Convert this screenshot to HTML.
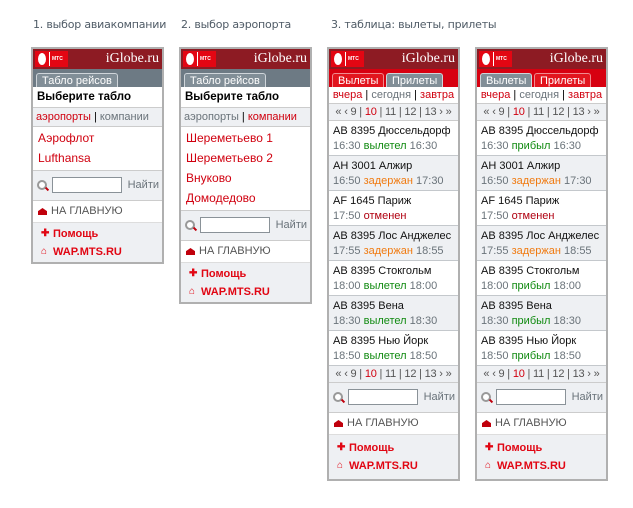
<!DOCTYPE html>
<html><head><meta charset="utf-8"><style>
body{margin:0;width:633px;height:508px;background:#fff;font-family:"Liberation Sans",sans-serif;position:relative;overflow:hidden}
.cap{position:absolute;top:18px;font-size:11px;color:#4f5b66;font-family:"DejaVu Sans",sans-serif;letter-spacing:-0.2px}
.p{position:absolute;top:47px;width:129px;border:2px solid #b0b0b0;background:#fff;font-size:11px;color:#222}
.hd{height:20px;background:#8d1b23;position:relative}
.logo{position:absolute;left:2px;top:2px;width:33px;height:16px;background:#e30613}
.logo i{position:absolute;left:3px;top:2px;width:8px;height:12px;background:#fff;border-radius:50%}
.logo b{position:absolute;left:14px;top:1px;width:17px;height:14px;font-size:5px;color:#fff;line-height:14px;border-left:1px solid #fff;padding-left:2px}
.hd .t{position:absolute;right:3px;top:2px;color:#fff;font-family:"Liberation Serif",serif;font-size:14px}
.tb{height:18px;background:#6d7a84;position:relative}
.tb.r{background:#d70010}
.tab{position:absolute;top:4px;height:14px;line-height:14px;font-size:11px;padding:0 5px;border-radius:3px 3px 0 0;color:#fff;background:#818e97;border:1px solid #cfd5da;border-bottom:0;box-sizing:border-box}
.tab.on{background:#e2151e;border-color:#f08a8f;color:#fff}
.sel{height:20px;line-height:20px;font-weight:bold;padding-left:4px;border-bottom:1px solid #ccc;font-size:11.5px;color:#000}
.lk{height:18px;line-height:18px;padding-left:3px;background:#eef0f3;border-bottom:1px solid #ccc;color:#6a737a}
.red{color:#d0000f}
.it{padding-left:5px;font-size:12px;color:#d0000f;line-height:20px}
.srch{height:29px;background:#eef0f3;border-top:1px solid #ccc;border-bottom:1px solid #ccc;position:relative;color:#6a737a}
.srch .m{position:absolute;left:4px;top:9px;width:6px;height:6px;border:2px solid #999;border-radius:50%;background:#fff}
.srch .m:after{content:"";position:absolute;left:6px;top:6px;width:4px;height:2px;background:#c0000c;transform:rotate(45deg)}
.srch input{position:absolute;left:19px;top:6px;width:70px;height:16px;border:1px solid #8a9298;padding:0;margin:0;box-sizing:border-box}
.srch span{position:absolute;right:3px;top:8px;font-size:11px}
.home{height:21px;line-height:21px;padding-left:18px;position:relative;color:#555;border-bottom:1px solid #ddd}
.home:before{content:"";position:absolute;left:5px;top:7px;width:9px;height:7px;background:#c0000c;clip-path:polygon(50% 0,100% 45%,100% 100%,0 100%,0 45%)}
.ft{background:#eef0f3;padding:2px 0 1px 8px;font-weight:bold;color:#e10613;line-height:18px}
.ft.b{padding:4px 0 4px 8px}
.ft div{padding-left:12px;position:relative}
.ft div:before{position:absolute;left:0;top:0;content:"✚";font-size:10px}
.ft div.w:before{content:"⌂";font-size:10px}
.dy{height:16px;line-height:16px;text-align:center;color:#6a737a;border-bottom:1px solid #ccc}
.pg{height:16px;line-height:16px;text-align:center;color:#555;background:#eef0f3;border-bottom:1px solid #ccc;letter-spacing:-0.2px}
.row{height:35px;border-bottom:1px solid #c4c8cc;padding-left:4px;line-height:15px;padding-top:3px;box-sizing:border-box;color:#111}
.row.g{background:#eef0f3}
.row .s{color:#6a737a}
.gr{color:#108a10}.or{color:#f07a10}.dr{color:#b00010}
</style></head><body>
<div class="cap" style="left:33px">1. выбор авиакомпании</div>
<div class="cap" style="left:181px">2. выбор аэропорта</div>
<div class="cap" style="left:331px">3. таблица: вылеты, прилеты</div>

<div class="p" style="left:31px">
<div class="hd"><div class="logo"><i></i><b>МТС</b></div><span class="t">iGlobe.ru</span></div>
<div class="tb"><div class="tab" style="left:3px">Табло рейсов</div></div>
<div class="sel">Выберите табло</div>
<div class="lk"><span class="red">аэропорты</span> <span style="color:#000">|</span> компании</div>
<div style="padding:1px 0 2px"><div class="it">Аэрофлот</div><div class="it">Lufthansa</div></div>
<div class="srch"><div class="m"></div><input><span>Найти</span></div>
<div class="home">НА ГЛАВНУЮ</div>
<div class="ft"><div>Помощь</div><div class="w">WAP.MTS.RU</div></div>
</div>

<div class="p" style="left:179px">
<div class="hd"><div class="logo"><i></i><b>МТС</b></div><span class="t">iGlobe.ru</span></div>
<div class="tb"><div class="tab" style="left:3px">Табло рейсов</div></div>
<div class="sel">Выберите табло</div>
<div class="lk">аэропорты <span style="color:#000">|</span> <span class="red">компании</span></div>
<div style="padding:1px 0 2px"><div class="it">Шереметьево 1</div><div class="it">Шереметьево 2</div><div class="it">Внуково</div><div class="it">Домодедово</div></div>
<div class="srch"><div class="m"></div><input><span>Найти</span></div>
<div class="home">НА ГЛАВНУЮ</div>
<div class="ft"><div>Помощь</div><div class="w">WAP.MTS.RU</div></div>
</div>

<div class="p" style="left:327px">
<div class="hd"><div class="logo"><i></i><b>МТС</b></div><span class="t">iGlobe.ru</span></div>
<div class="tb r"><div class="tab on" style="left:3px">Вылеты</div><div class="tab" style="left:57px">Прилеты</div></div>
<div class="dy"><span class="red">вчера</span> <span style="color:#000">|</span> сегодня <span style="color:#000">|</span> <span class="red">завтра</span></div>
<div class="pg">« ‹ 9 | <span class="red">10</span> | 11 | 12 | 13 › »</div>
<div class="row">AB 8395 Дюссельдорф<br><span class="s">16:30 <span class="gr">вылетел</span> 16:30</span></div>
<div class="row g">AH 3001 Алжир<br><span class="s">16:50 <span class="or">задержан</span> 17:30</span></div>
<div class="row">AF 1645 Париж<br><span class="s">17:50 <span class="dr">отменен</span></span></div>
<div class="row g">AB 8395 Лос Анджелес<br><span class="s">17:55 <span class="or">задержан</span> 18:55</span></div>
<div class="row">AB 8395 Стокгольм<br><span class="s">18:00 <span class="gr">вылетел</span> 18:00</span></div>
<div class="row g">AB 8395 Вена<br><span class="s">18:30 <span class="gr">вылетел</span> 18:30</span></div>
<div class="row">AB 8395 Нью Йорк<br><span class="s">18:50 <span class="gr">вылетел</span> 18:50</span></div>
<div class="pg">« ‹ 9 | <span class="red">10</span> | 11 | 12 | 13 › »</div>
<div class="srch" style="border-top:0"><div class="m"></div><input><span>Найти</span></div>
<div class="home">НА ГЛАВНУЮ</div>
<div class="ft b"><div>Помощь</div><div class="w">WAP.MTS.RU</div></div>
</div>

<div class="p" style="left:475px">
<div class="hd"><div class="logo"><i></i><b>МТС</b></div><span class="t">iGlobe.ru</span></div>
<div class="tb r"><div class="tab" style="left:3px">Вылеты</div><div class="tab on" style="left:57px">Прилеты</div></div>
<div class="dy"><span class="red">вчера</span> <span style="color:#000">|</span> сегодня <span style="color:#000">|</span> <span class="red">завтра</span></div>
<div class="pg">« ‹ 9 | <span class="red">10</span> | 11 | 12 | 13 › »</div>
<div class="row">AB 8395 Дюссельдорф<br><span class="s">16:30 <span class="gr">прибыл</span> 16:30</span></div>
<div class="row g">AH 3001 Алжир<br><span class="s">16:50 <span class="or">задержан</span> 17:30</span></div>
<div class="row">AF 1645 Париж<br><span class="s">17:50 <span class="dr">отменен</span></span></div>
<div class="row g">AB 8395 Лос Анджелес<br><span class="s">17:55 <span class="or">задержан</span> 18:55</span></div>
<div class="row">AB 8395 Стокгольм<br><span class="s">18:00 <span class="gr">прибыл</span> 18:00</span></div>
<div class="row g">AB 8395 Вена<br><span class="s">18:30 <span class="gr">прибыл</span> 18:30</span></div>
<div class="row">AB 8395 Нью Йорк<br><span class="s">18:50 <span class="gr">прибыл</span> 18:50</span></div>
<div class="pg">« ‹ 9 | <span class="red">10</span> | 11 | 12 | 13 › »</div>
<div class="srch" style="border-top:0"><div class="m"></div><input><span>Найти</span></div>
<div class="home">НА ГЛАВНУЮ</div>
<div class="ft b"><div>Помощь</div><div class="w">WAP.MTS.RU</div></div>
</div>
</body></html>
